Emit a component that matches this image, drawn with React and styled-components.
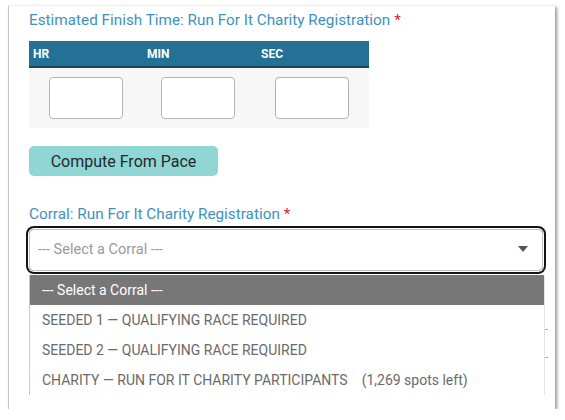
import React from "react";
import styled, { createGlobalStyle } from "styled-components";

const GlobalStyle = createGlobalStyle`
  body {
    margin: 0;
    background: #ffffff;
    font-family: Roboto, "Liberation Sans", sans-serif;
  }
`;

const Page = styled.div`
  padding: 5px 8px 0 8px;
`;

const Card = styled.div`
  width: 547px;
  height: 404px;
  box-sizing: border-box;
  background: #ffffff;
  border-left: 1px solid #c8c8c8;
  border-top: 1px solid #f0f0f0;
  box-shadow: 2px 2px 3px rgba(0, 0, 0, 0.4);
  padding: 4px 12px 0 20px;
  display: flex;
  flex-direction: column;
`;

const Label = styled.div`
  font-size: 15.3px;
  line-height: 20px;
  color: #3e92be;
  margin-top: ${(p) => p.$top || 0}px;

  span {
    color: #e0243c;
    margin-left: 4px;
  }
`;

const TimeTable = styled.div`
  width: 340px;
  margin-top: 11px;
`;

const TimeHead = styled.div`
  display: grid;
  grid-template-columns: repeat(3, 114px);
  height: 25px;
  background: #237296;
  border-bottom: 2px solid #1a4456;
  color: #ffffff;
  font-size: 12px;
  font-weight: 700;
  align-items: center;
`;

const HeadCell = styled.div`
  padding-left: 4px;
`;

const TimeBody = styled.div`
  display: grid;
  grid-template-columns: repeat(3, 114px);
  background: #f7f7f7;
  padding: 9px 0;
`;

const TimeInput = styled.input`
  width: 74px;
  height: 42px;
  box-sizing: border-box;
  margin-left: ${(p) => p.$left}px;
  border: 1px solid #b4b4b4;
  border-radius: 4px;
  background: #ffffff;
`;

const ComputeButton = styled.button`
  align-self: flex-start;
  margin-top: 18px;
  width: 189px;
  height: 30px;
  border: none;
  border-radius: 5px;
  background: #90d6d4;
  color: #1e2a2a;
  font-family: Roboto, "Liberation Sans", sans-serif;
  font-size: 16px;
`;

const SelectBox = styled.div`
  margin-top: 5px;
  width: 514px;
  height: 42px;
  box-sizing: border-box;
  border: 1px solid #c4c4c4;
  border-radius: 5px;
  box-shadow: 0 0 0 1px #ffffff, 0 0 0 3px #151515;
  display: flex;
  align-items: center;
  justify-content: space-between;
  padding: 0 14px 2px 8px;
  color: #9a9a9a;
  font-size: 14.5px;
`;

const Caret = styled.div`
  width: 0;
  height: 0;
  border-left: 5px solid transparent;
  border-right: 5px solid transparent;
  border-top: 6px solid #555555;
`;

const OptionList = styled.div`
  margin-top: 4px;
  width: 514px;
  border-left: 1px solid #c8c8c8;
  border-right: 1px solid #e4e4e4;
  position: relative;
`;

const Option = styled.div`
  height: 30px;
  display: flex;
  align-items: center;
  padding-left: 12px;
  font-size: 14px;
  color: ${(p) => (p.$active ? "#ffffff" : "#6a6a6a")};
  background: ${(p) => (p.$active ? "#777777" : "#ffffff")};

  em {
    font-style: normal;
    margin-left: 14px;
  }
`;

const Tick = styled.div`
  position: absolute;
  right: -4px;
  top: ${(p) => p.$top}px;
  width: 3px;
  height: 1px;
  background: #aaaaaa;
`;

export default function App() {
  return (
    <>
      <GlobalStyle />
      <Page>
        <Card>
          <Label>
            Estimated Finish Time: Run For It Charity Registration<span>*</span>
          </Label>
          <TimeTable>
            <TimeHead>
              <HeadCell>HR</HeadCell>
              <HeadCell>MIN</HeadCell>
              <HeadCell>SEC</HeadCell>
            </TimeHead>
            <TimeBody>
              <TimeInput $left={20} />
              <TimeInput $left={18} />
              <TimeInput $left={18} />
            </TimeBody>
          </TimeTable>
          <ComputeButton>Compute From Pace</ComputeButton>
          <Label $top={28}>
            Corral: Run For It Charity Registration<span>*</span>
          </Label>
          <SelectBox>
            --- Select a Corral ---
            <Caret />
          </SelectBox>
          <OptionList>
            <Option $active>--- Select a Corral ---</Option>
            <Option>SEEDED 1 — QUALIFYING RACE REQUIRED</Option>
            <Option>SEEDED 2 — QUALIFYING RACE REQUIRED</Option>
            <Option>
              CHARITY — RUN FOR IT CHARITY PARTICIPANTS<em>(1,269 spots left)</em>
            </Option>
            <Tick $top={54} />
            <Tick $top={82} />
          </OptionList>
        </Card>
      </Page>
    </>
  );
}
